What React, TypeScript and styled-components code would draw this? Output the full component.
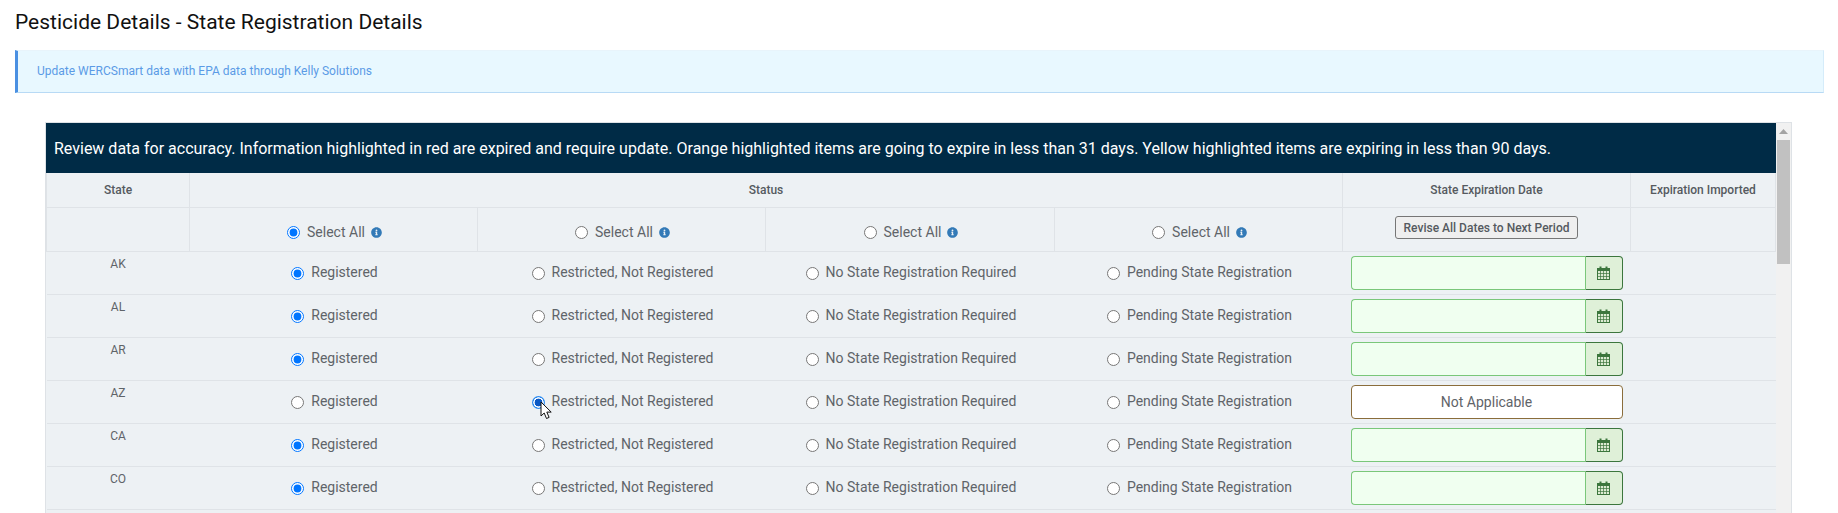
import React from "react";
import styled, { createGlobalStyle } from "styled-components";
import { FaInfoCircle } from "react-icons/fa";

const Global = createGlobalStyle`
  html, body { margin: 0; padding: 0; height: 100%; overflow: hidden; background: #fff; }
  body { font-family: Roboto, "Liberation Sans", sans-serif; }
`;

const Page = styled.div`
  height: 513px;
  overflow: hidden;
  padding: 0 14px 0 15px;
`;

const Title = styled.h1`
  margin: 0;
  height: 50px;
  padding-top: 9px;
  box-sizing: border-box;
  font-size: 21px;
  line-height: 26px;
  font-weight: 400;
  color: #111;
`;

const Alert = styled.div`
  box-sizing: border-box;
  height: 43px;
  display: flex;
  align-items: center;
  padding: 0 0 2px 19px;
  background: #e8f8ff;
  border-left: 3px solid #4a90e2;
  border-bottom: 1px solid #b8daf5;
  border-right: 1px solid #d5ecfa;
  border-top: 1px solid #e8f4fb;
  font-size: 12px;
  color: #5b9be6;
`;

const Panel = styled.div`
  box-sizing: border-box;
  display: flex;
  margin: 29px 0 0 30px;
  width: 1747px;
  height: 391px;
  border: 1px solid #dee2e6;
  border-bottom: 0;
  overflow: hidden;
`;

const Content = styled.div`
  flex: 1;
  min-width: 0;
  background: #edf1f4;
`;

const Rail = styled.div`
  flex: 0 0 15px;
  display: flex;
  flex-direction: column;
  background: #f1f1f1;
`;

const RailArrow = styled.div`
  height: 17px;
  display: flex;
  align-items: center;
  justify-content: center;
`;

const RailThumb = styled.div`
  height: 124px;
  margin: 0 1px;
  background: #c1c1c1;
`;

const Banner = styled.div`
  height: 50px;
  display: flex;
  align-items: center;
  padding-left: 8px;
  background: #002b46;
  color: #fff;
  font-size: 16px;
`;

const Table = styled.table`
  width: 100%;
  table-layout: fixed;
  border-collapse: collapse;
  background: #edf1f4;
  color: #5f6469;
`;

const HeadCell = styled.th`
  height: 34px;
  padding: 0;
  font-size: 12px;
  font-weight: 500;
  color: #555a60;
  text-align: center;
  border: 1px solid #dfe3e7;
  border-top: 0;
`;

const ToolCell = styled.td<{ $raised?: boolean }>`
  height: 44px;
  padding: ${(p) => (p.$raised ? "0 0 4px" : "6px 0 0 2px")};
  box-sizing: border-box;
  text-align: center;
  border: 1px solid #dfe3e7;
`;

const Row = styled.tr`
  height: 43px;
  border-bottom: 1px solid #dfe3e7;
`;

const StateCell = styled.td`
  padding: 4px 0 0;
  vertical-align: top;
  text-align: center;
  font-size: 12px;
  line-height: 16px;
  color: #5f6469;
`;

const StatusCell = styled.td`
  padding: 0 0 0 2px;
  text-align: center;
`;

const Choice = styled.label`
  display: inline-flex;
  align-items: center;
  gap: 7px;
  font-size: 14px;
  line-height: 20px;
  position: relative;
`;

const Radio = styled.input`
  width: 13px;
  height: 13px;
  margin: 2px 0 0;
  accent-color: #0075ff;
`;

const FocusedRadio = styled.input`
  appearance: none;
  width: 13px;
  height: 13px;
  margin: 2px 0 0;
  border-radius: 50%;
  background: radial-gradient(circle at center, #0a58c4 0 3.6px, #fff 4.2px 4.9px, #2b8af0 5.4px);
`;

const Info = styled(FaInfoCircle)`
  width: 11px;
  height: 11px;
  margin-left: -1px;
  margin-top: 2px;
  color: #337ab7;
`;

const Cursor = styled.svg`
  position: absolute;
  left: 8px;
  top: 10px;
  width: 13px;
  height: 19px;
  pointer-events: none;
`;

const DateCell = styled.td`
  padding: 0 0 1px;
`;

const InputGroup = styled.div`
  box-sizing: border-box;
  display: flex;
  width: 272px;
  height: 34px;
  margin-left: 8px;
`;

const DateInput = styled.input`
  box-sizing: border-box;
  flex: 1;
  min-width: 0;
  height: 34px;
  padding: 0 8px;
  background: #f0fff0;
  border: 1px solid #7ac77a;
  border-right: 0;
  border-radius: 4px 0 0 4px;
  outline: none;
`;

const CalendarAddon = styled.button`
  box-sizing: border-box;
  width: 38px;
  height: 34px;
  padding: 0;
  display: flex;
  align-items: center;
  justify-content: center;
  background: #dff0d8;
  border: 1px solid #3c763d;
  border-left-color: #7ac77a;
  border-radius: 0 4px 4px 0;
`;

const NotApplicable = styled.div`
  box-sizing: border-box;
  width: 272px;
  height: 34px;
  margin-left: 8px;
  display: flex;
  align-items: center;
  justify-content: center;
  background: #fff;
  border: 1px solid #8a6d3b;
  border-radius: 4px;
  font-size: 14px;
  color: #5f6469;
`;

const ReviseButton = styled.button`
  box-sizing: border-box;
  height: 23px;
  padding: 0 8px;
  font-family: inherit;
  font-size: 12px;
  font-weight: 500;
  color: #555a60;
  background: #efefef;
  border: 1px solid #767676;
  border-radius: 3px;
`;

const Calendar = () => (
  <svg width="13" height="14" viewBox="0 0 13 14" fill="none" stroke="#3c763d">
    <rect x="0.5" y="2.5" width="12" height="11" fill="#dcebd2" strokeWidth="1" />
    <rect x="0" y="2" width="13" height="3" fill="#3c763d" stroke="none" />
    <path d="M3.5 0.5v3M9.5 0.5v3" strokeWidth="2" />
    <path d="M0.5 7.5h12M0.5 10.5h12M3.5 5v8.5M6.5 5v8.5M9.5 5v8.5" strokeWidth="0.7" />
  </svg>
);

const STATES = ["AK", "AL", "AR", "AZ", "CA", "CO"];
const OPTIONS = ["Registered", "Restricted, Not Registered", "No State Registration Required", "Pending State Registration"];

export default function App() {
  return (
    <Page>
      <Global />
      <Title>Pesticide Details - State Registration Details</Title>
      <Alert>Update WERCSmart data with EPA data through Kelly Solutions</Alert>
      <Panel>
        <Content>
          <Banner>
            Review data for accuracy. Information highlighted in red are expired and require update. Orange highlighted items are going to expire in less than 31 days. Yellow highlighted items are expiring in less than 90 days.
          </Banner>
          <Table>
            <colgroup>
              <col style={{ width: 143 }} />
              <col style={{ width: 288 }} />
              <col style={{ width: 288 }} />
              <col style={{ width: 289 }} />
              <col style={{ width: 288 }} />
              <col style={{ width: 288 }} />
              <col />
            </colgroup>
            <thead>
              <tr>
                <HeadCell>State</HeadCell>
                <HeadCell colSpan={4}>Status</HeadCell>
                <HeadCell>State Expiration Date</HeadCell>
                <HeadCell>Expiration Imported</HeadCell>
              </tr>
              <tr>
                <ToolCell />
                {[0, 1, 2, 3].map((i) => (
                  <ToolCell key={i}>
                    <Choice>
                      <Radio type="radio" name="all" defaultChecked={i === 0} />
                      Select All
                      <Info />
                    </Choice>
                  </ToolCell>
                ))}
                <ToolCell $raised>
                  <ReviseButton type="button">Revise All Dates to Next Period</ReviseButton>
                </ToolCell>
                <ToolCell />
              </tr>
            </thead>
            <tbody>
              {STATES.map((s) => {
                const picked = s === "AZ" ? 1 : 0;
                return (
                  <Row key={s}>
                    <StateCell>{s}</StateCell>
                    {OPTIONS.map((o, i) => {
                      const focused = s === "AZ" && i === 1;
                      const Control = focused ? FocusedRadio : Radio;
                      return (
                        <StatusCell key={o}>
                          <Choice>
                            <Control type="radio" name={s} defaultChecked={i === picked} />
                            {o}
                            {focused && (
                              <Cursor viewBox="0 0 13 19">
                                <path d="M1 1v14l3.2-3 2.3 5.5 2.6-1.1-2.3-5.3h4.4z" fill="#fff" stroke="#111" strokeWidth="1" strokeLinejoin="round" />
                              </Cursor>
                            )}
                          </Choice>
                        </StatusCell>
                      );
                    })}
                    <DateCell>
                      {s === "AZ" ? (
                        <NotApplicable>Not Applicable</NotApplicable>
                      ) : (
                        <InputGroup>
                          <DateInput type="text" aria-label={`${s} expiration`} />
                          <CalendarAddon type="button" aria-label="Pick date">
                            <Calendar />
                          </CalendarAddon>
                        </InputGroup>
                      )}
                    </DateCell>
                    <td />
                  </Row>
                );
              })}
            </tbody>
          </Table>
        </Content>
        <Rail>
          <RailArrow>
            <svg width="9" height="5" viewBox="0 0 9 5">
              <path d="M4.5 0L9 5H0z" fill="#a3a3a3" />
            </svg>
          </RailArrow>
          <RailThumb />
        </Rail>
      </Panel>
    </Page>
  );
}
